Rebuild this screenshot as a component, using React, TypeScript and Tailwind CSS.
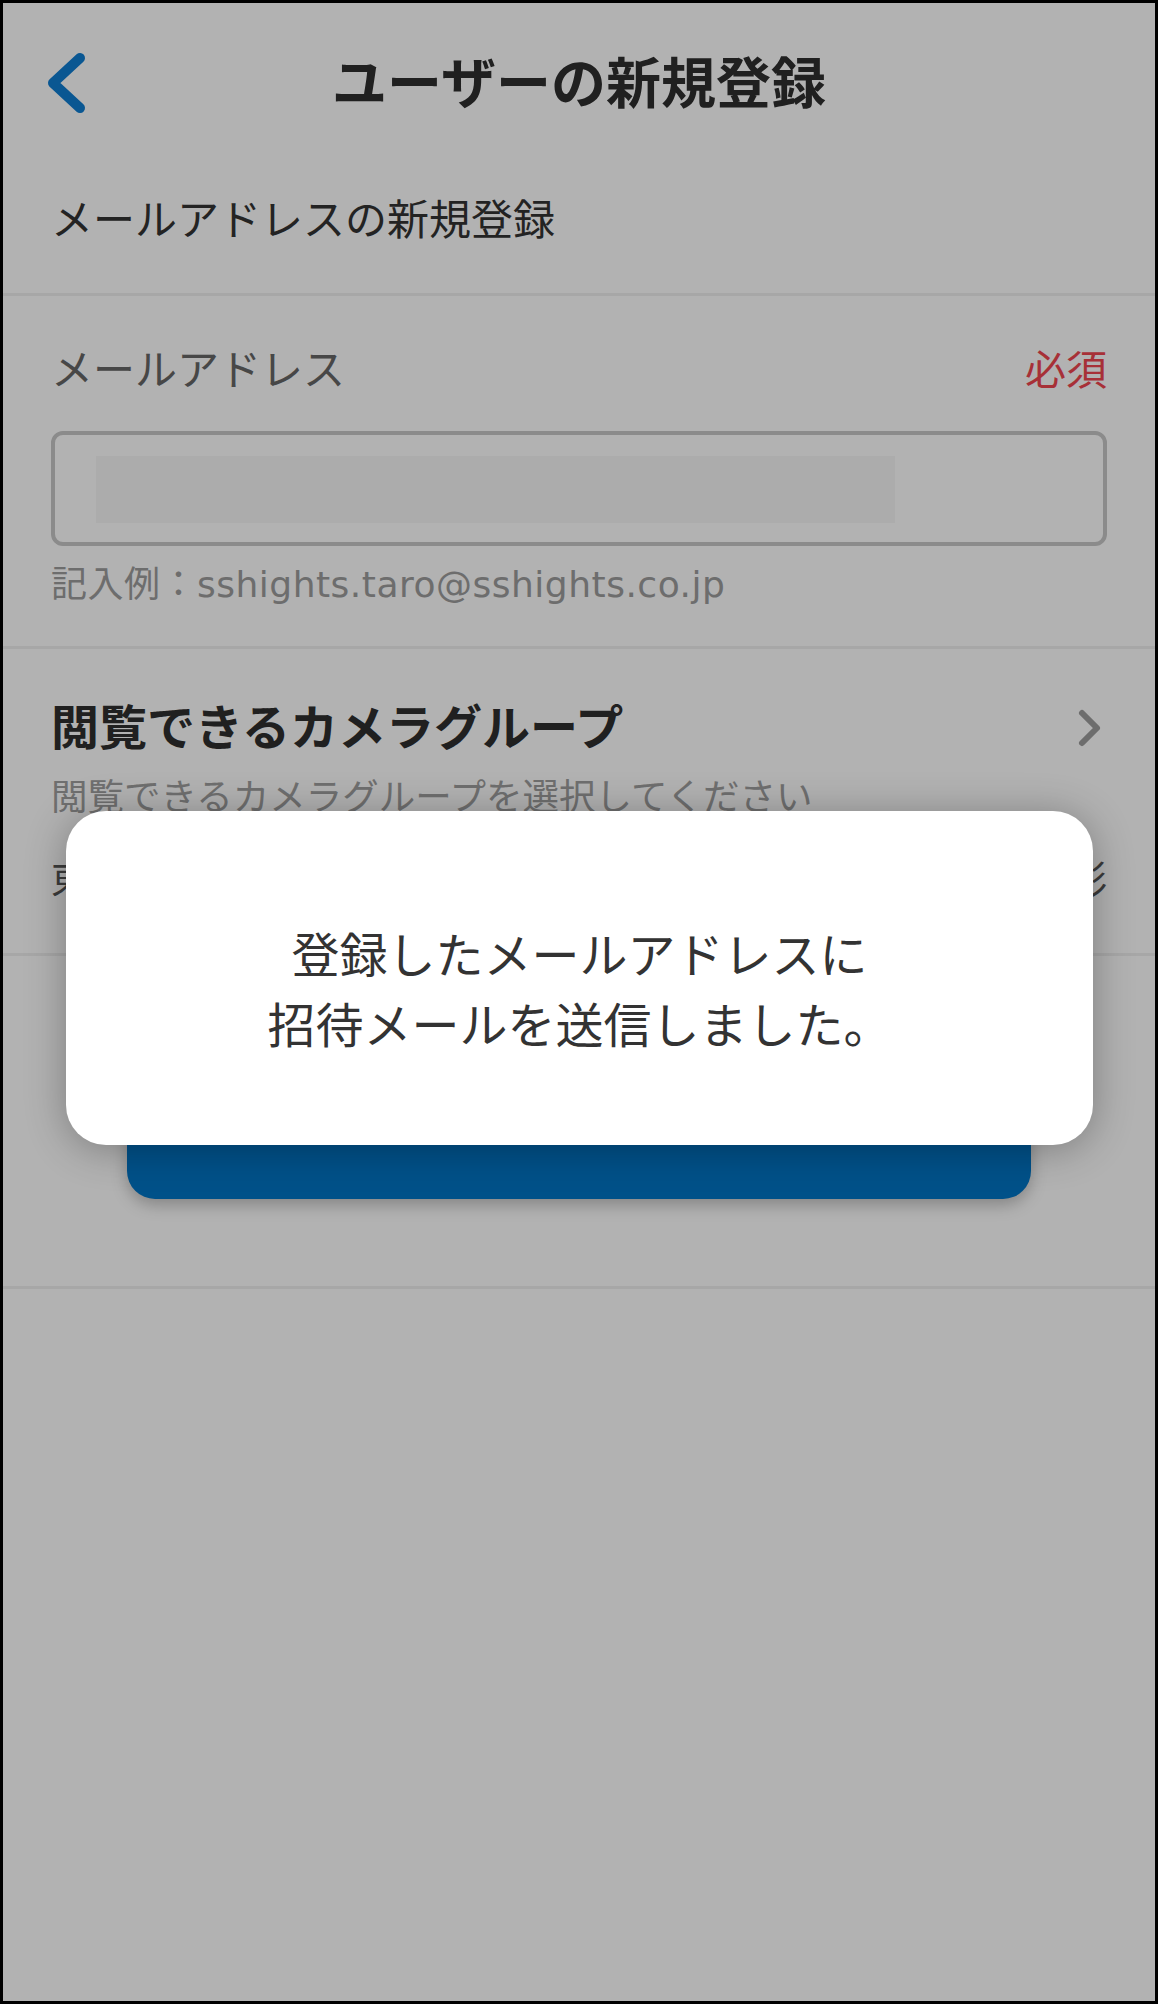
const FONT = { fontFamily: '"Noto Sans CJK JP", "Noto Sans", sans-serif' };
const LATIN = { fontFamily: '"DejaVu Sans", "Noto Sans CJK JP", sans-serif' };

export default function App() {
  return (
    <div
      className="relative w-[1158px] h-[2004px] border-[3px] border-black bg-white overflow-hidden"
      style={FONT}
    >
      {/* Header */}
      <header className="relative flex items-center justify-center h-[160px]">
        <button className="absolute left-[40px] top-[45px]">
          <svg width="50" height="70" viewBox="0 0 50 70" fill="none">
            <path
              d="M37 10 L10 35 L37 60"
              stroke="#0f7dd2"
              strokeWidth="10"
              strokeLinecap="round"
              strokeLinejoin="round"
            />
          </svg>
        </button>
        <h1 className="text-[55px] font-bold text-[#2e2e2e] pb-[8px]">ユーザーの新規登録</h1>
      </header>

      {/* Section title */}
      <div className="px-[48px] pt-[22px] pb-[44px] border-b-[3px] border-[#efefef]">
        <p className="text-[42px] leading-[64px] text-[#333]">メールアドレスの新規登録</p>
      </div>

      {/* Email field */}
      <div className="px-[48px] pt-[41px] pb-[36px] border-b-[3px] border-[#efefef]">
        <div className="flex items-center justify-between">
          <span className="text-[42px] leading-[60px] text-[#666]">メールアドレス</span>
          <span className="text-[41px] leading-[60px] text-[#f0464f]">必須</span>
        </div>
        <div className="mt-[34px] h-[115px] rounded-[12px] border-[4px] border-[#c7c7c7] pl-[41px] pt-[21px]">
          <div className="w-[799px] h-[67px] bg-[#f6f6f6]" />
        </div>
        <p className="mt-[14px] text-[36px] leading-[50px] tracking-[0.5px] text-[#9c9c9c]" style={LATIN}>
          記入例：sshights.taro@sshights.co.jp
        </p>
      </div>

      {/* Camera group */}
      <div className="px-[48px] pt-[40px] pb-[48px] border-b-[3px] border-[#efefef]">
        <div className="flex items-center justify-between">
          <span className="text-[48px] leading-[70px] font-bold text-[#2e2e2e]">
            閲覧できるカメラグループ
          </span>
          <svg width="34" height="42" viewBox="0 0 34 42" fill="none" className="mt-[8px]">
            <path
              d="M9 6 L24 21 L9 36"
              stroke="#9d9d9d"
              strokeWidth="6"
              strokeLinecap="round"
              strokeLinejoin="round"
            />
          </svg>
        </div>
        <p className="mt-[8px] text-[36.5px] leading-[56px] text-[#a0a0a0]">
          閲覧できるカメラグループを選択してください
        </p>
        <div className="mt-[26px] flex items-center justify-between text-[38px] leading-[56px] text-[#555]">
          <span>東京本社</span>
          <span>撮影</span>
        </div>
      </div>

      {/* Submit button */}
      <div className="px-[124px] pt-[73px] pb-[87px] border-b-[3px] border-[#efefef]">
        <button className="w-full h-[170px] rounded-[28px] bg-[#0074c4] text-white text-[44px] font-bold shadow-[0_6px_16px_rgba(0,0,0,0.25)] flex items-start justify-center pt-[40px]">
          登録する
        </button>
      </div>

      {/* Dimmed overlay */}
      <div className="absolute inset-0 bg-black/30" />

      {/* Alert */}
      <div className="absolute left-[63px] right-[62px] top-[808px] h-[334px] rounded-[40px] bg-white shadow-[0_4px_40px_rgba(0,0,0,0.3)] flex flex-col items-center justify-center pt-[18px]">
        <p className="text-[48px] leading-[70px] text-[#333] text-center">
          登録したメールアドレスに
          <br />
          招待メールを送信しました。
        </p>
      </div>
    </div>
  );
}
